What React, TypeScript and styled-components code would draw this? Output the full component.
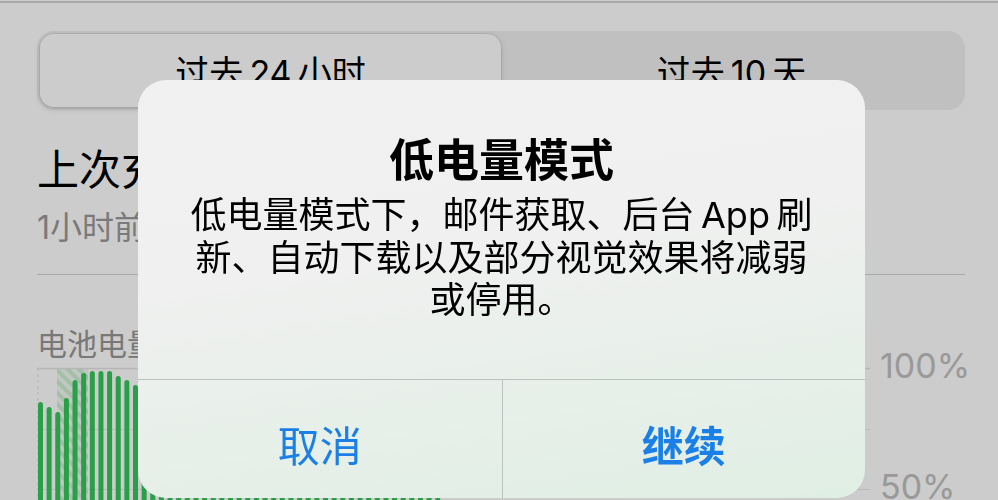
import styled, { createGlobalStyle } from "styled-components";

const GlobalStyle = createGlobalStyle`
    html, body {
        margin: 0;
        height: 100%;
        overflow: hidden;
        background: #ffffff;
        font-family: "Inter", "Noto Sans CJK SC", sans-serif;
    }
`;

const Page = styled.div`
    padding: 0 33px 0 37px;
`;

const TopRule = styled.div`
    height: 2px;
    margin: 1px -33px 0 -37px;
    background: #d2d2d2;
`;

const Segmented = styled.div`
    display: grid;
    grid-template-columns: 1fr 1fr;
    height: 79px;
    margin-top: 28px;
    padding: 3px;
    box-sizing: border-box;
    border-radius: 17px;
    background: #f0f0f0;
`;

const Segment = styled.div<{ $active?: boolean }>`
    display: flex;
    align-items: center;
    justify-content: center;
    border-radius: 14px;
    font-size: 34px;
    color: #000;
    background: ${(p) => (p.$active ? "#ffffff" : "transparent")};
    box-shadow: ${(p) =>
        p.$active ? "0 0 0 1px rgba(0,0,0,0.06), 0 2px 6px rgba(0,0,0,0.14)" : "none"};
`;

const Heading = styled.div`
    margin-top: 35px;
    font-size: 42px;
    line-height: 50px;
    color: #000;
`;

const SubHeading = styled.div`
    margin-top: 13px;
    font-size: 32px;
    line-height: 40px;
    color: #999999;
`;

const Divider = styled.div`
    height: 1px;
    margin-top: 26px;
    background: #d3d3d3;
`;

const ChartGrid = styled.div`
    display: grid;
    grid-template-columns: 833px 1fr;
    column-gap: 10px;
`;

const ChartTitle = styled.div`
    margin-top: 51px;
    font-size: 30px;
    line-height: 36px;
    color: #969696;
`;

const AxisLabels = styled.div`
    grid-column: 2;
    grid-row: 1 / span 2;
    display: flex;
    flex-direction: column;
    gap: 87px;
    padding-top: 74px;
`;

const AxisLabel = styled.div`
    font-size: 34px;
    line-height: 34px;
    color: #c0c0c0;
`;

const ChartSvg = styled.svg`
    display: block;
    grid-column: 1;
`;

const Backdrop = styled.div`
    position: fixed;
    inset: 0;
    display: flex;
    justify-content: center;
    align-items: flex-start;
    padding: 80px 0 0 5px;
    background: rgba(0, 0, 0, 0.2);
`;

const Alert = styled.div`
    display: flex;
    flex-direction: column;
    width: 727px;
    height: 418px;
    border-radius: 28px;
    overflow: hidden;
    background: linear-gradient(172deg, #f1f1f1 0%, #eff0ef 42%, #e0efe4 100%);
`;

const AlertBody = styled.div`
    padding: 55px 30px 0;
    text-align: center;
    color: #000;
`;

const AlertTitle = styled.div`
    font-size: 45px;
    line-height: 52px;
    font-weight: 700;
`;

const AlertMessage = styled.div`
    margin-top: 7px;
    font-size: 36px;
    line-height: 42.5px;
`;

const AlertActions = styled.div`
    display: grid;
    grid-template-columns: 1fr 1fr;
    height: 118px;
    margin-top: auto;
    border-top: 1px solid #bcc3be;
`;

const AlertButton = styled.div<{ $primary?: boolean }>`
    display: flex;
    align-items: center;
    justify-content: center;
    padding-top: 8px;
    font-size: 42px;
    font-weight: ${(p) => (p.$primary ? 700 : 400)};
    color: #1a7fe6;
    & + & {
        border-left: 1px solid #bcc3be;
    }
`;

// chart drawing, in svg units (svg top = page y 362)
const CHART_W = 833;
const CHART_H = 138;
const PITCH = 8.636;
const firstTops = [38, 43, 48, 34, 16, 9, 7, 7, 7, 12, 16, 21];
const barTops: number[] = [];
for (let i = 0; i < 50; i++) {
    barTops.push(i < firstTops.length ? firstTops[i] : 21 + (i - 11) * 3.2);
}

function BatteryChart() {
    return (
        <ChartSvg width={CHART_W} height={CHART_H} viewBox={`0 0 ${CHART_W} ${CHART_H}`}>
            <defs>
                <pattern
                    id="charging"
                    width="8"
                    height="8"
                    patternUnits="userSpaceOnUse"
                    patternTransform="rotate(-45)"
                >
                    <rect width="8" height="8" fill="#f2faf3" />
                    <rect width="4" height="8" fill="#cdeed2" />
                </pattern>
            </defs>
            <rect x="20" y="4" width="31" height={CHART_H - 4} fill="url(#charging)" />
            <line x1="0" y1="4.5" x2={CHART_W} y2="4.5" stroke="#e4e4e4" strokeWidth="1.5" />
            <line x1="0" y1="65.5" x2={CHART_W} y2="65.5" stroke="#e8e8e8" strokeWidth="1" />
            <line x1="0" y1="125.5" x2={CHART_W} y2="125.5" stroke="#e8e8e8" strokeWidth="1" />
            <line x1="1" y1="4" x2="1" y2={CHART_H} stroke="#e2e2e2" strokeWidth="1" strokeDasharray="3 3" />
            {barTops
                .filter((top) => top < CHART_H)
                .map((top, i) => (
                    <rect
                        key={i}
                        x={3.5 + i * PITCH - 2.5}
                        y={top}
                        width={5}
                        height={CHART_H - top + 3}
                        rx={2.5}
                        fill="#34c759"
                    />
                ))}
        </ChartSvg>
    );
}

export default function App() {
    return (
        <>
            <GlobalStyle />
            <Page>
                <TopRule />
                <Segmented>
                    <Segment $active>过去{"\u2009"}24{"\u2009"}小时</Segment>
                    <Segment>过去{"\u2009"}10{"\u2009"}天</Segment>
                </Segmented>
                <Heading>上次充电至 100%</Heading>
                <SubHeading>1小时前</SubHeading>
                <Divider />
                <ChartGrid>
                    <ChartTitle>电池电量</ChartTitle>
                    <AxisLabels>
                        <AxisLabel>100%</AxisLabel>
                        <AxisLabel>50%</AxisLabel>
                    </AxisLabels>
                    <BatteryChart />
                </ChartGrid>
            </Page>
            <Backdrop>
                <Alert>
                    <AlertBody>
                        <AlertTitle>低电量模式</AlertTitle>
                        <AlertMessage>
                            低电量模式下，邮件获取、后台{"\u2009"}App{"\u2009"}刷
                            <br />
                            新、自动下载以及部分视觉效果将减弱
                            <br />
                            或停用。
                        </AlertMessage>
                    </AlertBody>
                    <AlertActions>
                        <AlertButton>取消</AlertButton>
                        <AlertButton $primary>继续</AlertButton>
                    </AlertActions>
                </Alert>
            </Backdrop>
        </>
    );
}
